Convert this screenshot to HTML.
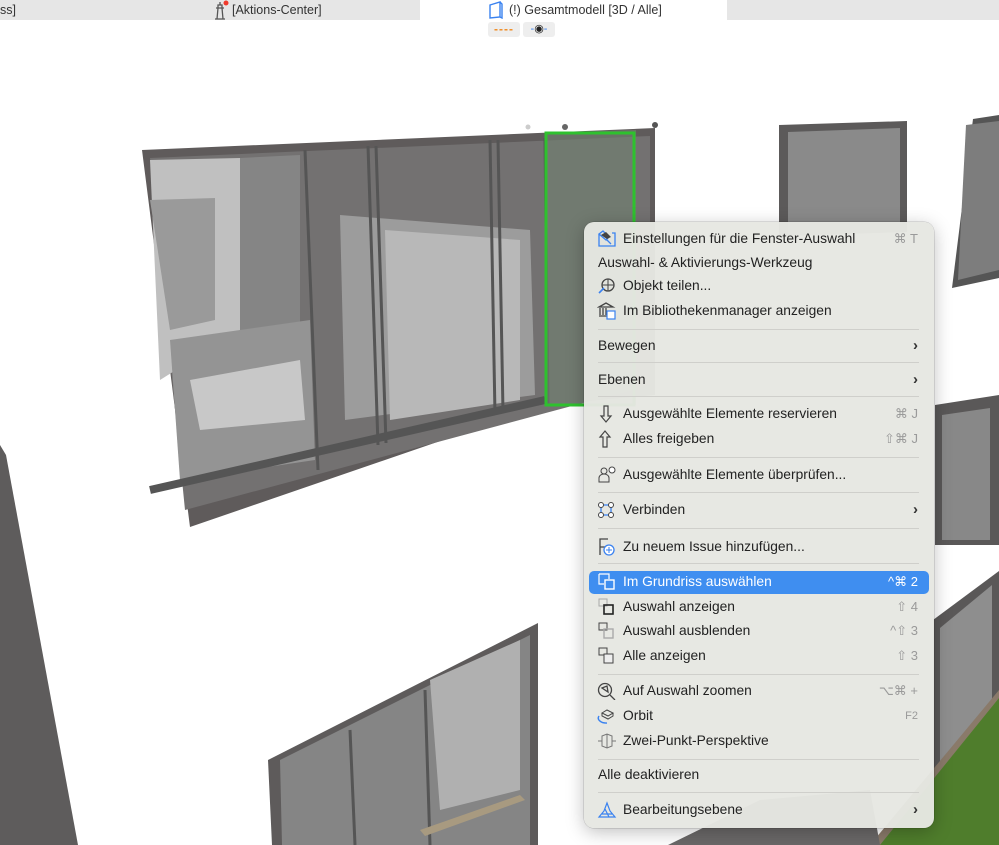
<!DOCTYPE html>
<html><head><meta charset="utf-8"><style>
*{margin:0;padding:0;box-sizing:border-box}
body{width:999px;height:845px;overflow:hidden;background:#fff;position:relative;font-family:"Liberation Sans",sans-serif}
.tab{position:absolute;top:0;height:20px;font-size:12.5px;color:#333;line-height:20px}
.menu{position:absolute;left:584px;top:222px;width:350px;height:606px;border-radius:10px;background:rgba(230,231,226,0.97);box-shadow:0 4px 18px rgba(0,0,0,0.25),0 0 0 0.5px rgba(0,0,0,0.2)}
.it{position:absolute;left:0;width:350px;height:22px;font-size:13.8px;color:#222;line-height:22px}
.it .t{position:absolute;left:39px}
.it .t0{position:absolute;left:14px}
.it .k{position:absolute;right:16px;color:#9a9a9a;font-size:13px}
.it .a{position:absolute;right:16px;color:#333;font-size:15px;font-weight:bold}
.it svg{position:absolute;left:13px;top:2px}
.sep{position:absolute;left:14px;width:321px;height:1px;background:#cfcfcb}
.hl{position:absolute;left:5px;top:349px;width:340px;height:23px;border-radius:5px;background:#3f8ef0}
</style></head><body>
<svg width="999" height="845" style="position:absolute;left:0;top:0">
<!-- left wall edge -->
<polygon points="0,445 6,455 78,845 0,845" fill="#5e5c5c"/>
<!-- big window -->
<polygon points="142,150 655,128 655,395 545,405 190,527" fill="#5f5b5b"/>
<polygon points="150,158 650,136 650,385 185,510" fill="#737171"/>
<polygon points="150,160 240,158 240,330 160,380" fill="#c0c0c0"/>
<polygon points="150,200 215,198 215,320 170,330" fill="#9a9a9a"/>
<polygon points="240,158 300,155 300,330 240,330" fill="#858585"/>
<polygon points="170,340 310,320 315,460 180,480" fill="#949494"/>
<polygon points="190,380 300,360 305,420 200,430" fill="#c8c8c8"/>
<polygon points="340,215 530,230 535,395 345,420" fill="#9c9c9c"/>
<polygon points="385,230 520,240 520,400 390,420" fill="#b8b8b8"/>
<g stroke="#555" stroke-width="3" fill="none">
<line x1="305" y1="150" x2="318" y2="470"/><line x1="368" y1="146" x2="378" y2="445"/>
<line x1="376" y1="146" x2="386" y2="443"/><line x1="490" y1="140" x2="495" y2="415"/>
<line x1="498" y1="140" x2="503" y2="412"/><line x1="545" y1="138" x2="548" y2="405"/>
<line x1="150" y1="490" x2="545" y2="400" stroke-width="8" stroke="#555"/>
</g>
<polygon points="545,133 636,130 636,405 545,405" fill="#6f806f" opacity="0.6"/>
<rect x="546" y="133" width="88" height="272" fill="none" stroke="#2ec12e" stroke-width="3"/>
<circle cx="528" cy="127" r="2.5" fill="#ccc"/><circle cx="565" cy="127" r="3" fill="#666"/><circle cx="655" cy="125" r="3" fill="#555"/>
<!-- right windows -->
<polygon points="779,125 907,121 907,232 779,236" fill="#5c5a5a"/>
<polygon points="788,132 900,128 900,232 788,236" fill="#8a8a8a"/>
<polygon points="973,119 999,115 999,278 952,288" fill="#555"/>
<polygon points="966,125 999,121 999,270 958,280" fill="#7d7d7d"/>
<polygon points="935,405 999,395 999,545 935,545" fill="#5a5858"/>
<polygon points="942,415 990,408 990,540 942,540" fill="#888"/>
<polygon points="933,620 999,571 999,845 933,845" fill="#5a5858"/>
<polygon points="940,628 992,585 992,760 940,775" fill="#8e8e8e"/>
<polygon points="999,690 999,845 870,845" fill="#8a7a6a"/>
<polygon points="999,698 999,845 880,845" fill="#4f7d2c"/>
<polygon points="668,845 760,800 870,790 880,845" fill="#6a6868"/>
<!-- lower window -->
<polygon points="268,760 538,623 538,845 272,845" fill="#5e5b5b"/>
<polygon points="280,760 530,635 530,845 282,845" fill="#858585"/>
<polygon points="430,680 520,640 520,790 440,810" fill="#b0b0b0"/>
<line x1="425" y1="690" x2="430" y2="845" stroke="#555" stroke-width="3"/>
<line x1="350" y1="730" x2="355" y2="845" stroke="#555" stroke-width="3"/>
<polygon points="420,830 520,795 525,800 425,836" fill="#a89a80"/>
</svg>
<div style="position:absolute;left:0;top:0;width:420px;height:20px;background:#e6e6e6"></div>
<div style="position:absolute;left:727px;top:0;width:272px;height:20px;background:#e6e6e6"></div>
<div class="tab" style="left:0">ss]</div>
<svg style="position:absolute;left:210px;top:0" width="20" height="20"><path d="M5 19h10M7 19l1-11h4l1 11M6 8h8M8 8V5h4v3M10 5V2" stroke="#555" fill="none" stroke-width="1.3"/><circle cx="16" cy="3" r="2.5" fill="#f03a2c"/></svg>
<div class="tab" style="left:232px">[Aktions-Center]</div>
<svg style="position:absolute;left:487px;top:1px" width="18" height="18"><path d="M3 4l10-3v15l-10 1z M13 1l2 2v14l-2-1" stroke="#3a82f0" fill="none" stroke-width="1.4"/></svg>
<div class="tab" style="left:509px">(!) Gesamtmodell [3D / Alle]</div>
<div style="position:absolute;left:488px;top:22px;width:32px;height:15px;background:#eee;border-radius:3px;color:#f08a20;font-size:12px;font-weight:bold;text-align:center;line-height:14px;letter-spacing:1px">----</div>
<div style="position:absolute;left:523px;top:22px;width:32px;height:15px;background:#eee;border-radius:3px;color:#3a82f0;font-size:11px;text-align:center;line-height:14px">-<span style="color:#222">◉</span>-</div>

<div class="menu">
<div class="it" style="top:6px"><svg width="20" height="18"><path d="M2 4v12h16V3h-3M2 4l4-3 6 6-3 3z M9 9l5 5" stroke="#3a82f0" fill="none" stroke-width="1.3"/><path d="M4 5l5-3 5 5-4 2z" fill="#444"/></svg><span class="t">Einstellungen für die Fenster-Auswahl</span><span class="k">⌘ T</span></div>
<div class="it" style="top:30px"><span class="t0">Auswahl- &amp; Aktivierungs-Werkzeug</span></div>
<div class="it" style="top:53px"><svg width="20" height="18"><circle cx="11" cy="8" r="6" stroke="#444" fill="none" stroke-width="1.3"/><path d="M5 8h12M11 2v12" stroke="#444" stroke-width="1"/><path d="M2 16l5-5" stroke="#3a82f0" stroke-width="1.6"/></svg><span class="t">Objekt teilen...</span></div>
<div class="it" style="top:78px"><svg width="20" height="18"><path d="M2 5l7-4 7 4z M3 6v7M6 6v7M9 6v7M2 14h12" stroke="#444" fill="none" stroke-width="1.3"/><rect x="10" y="9" width="8" height="8" stroke="#3a82f0" fill="#fff" stroke-width="1.2"/></svg><span class="t">Im Bibliothekenmanager anzeigen</span></div>
<div class="sep" style="top:107px"></div>
<div class="it" style="top:113px"><span class="t0">Bewegen</span><span class="a">›</span></div>
<div class="sep" style="top:140px"></div>
<div class="it" style="top:147px"><span class="t0">Ebenen</span><span class="a">›</span></div>
<div class="sep" style="top:174px"></div>
<div class="it" style="top:181px"><svg width="20" height="18"><path d="M7 1v10H4l5 6 5-6h-3V1z" stroke="#444" fill="none" stroke-width="1.2"/></svg><span class="t">Ausgewählte Elemente reservieren</span><span class="k">⌘ J</span></div>
<div class="it" style="top:206px"><svg width="20" height="18"><path d="M6 17V7H3l5-6 5 6h-3v10z" stroke="#444" fill="none" stroke-width="1.2"/></svg><span class="t">Alles freigeben</span><span class="k">⇧⌘ J</span></div>
<div class="sep" style="top:235px"></div>
<div class="it" style="top:242px"><svg width="20" height="18"><circle cx="7" cy="5" r="3" stroke="#444" fill="none"/><path d="M2 16v-4a5 4 0 0 1 10 0v4z" stroke="#444" fill="none"/><circle cx="15" cy="4" r="3" stroke="#444" fill="#fff"/></svg><span class="t">Ausgewählte Elemente überprüfen...</span></div>
<div class="sep" style="top:270px"></div>
<div class="it" style="top:277px"><svg width="20" height="18"><path d="M4 4h10M4 14h10M4 4v10M14 4v10" stroke="#3a82f0" stroke-width="1.3"/><circle cx="4" cy="4" r="2.5" fill="#fff" stroke="#444"/><circle cx="14" cy="4" r="2.5" fill="#fff" stroke="#444"/><circle cx="4" cy="14" r="2.5" fill="#fff" stroke="#444"/><circle cx="14" cy="14" r="2.5" fill="#fff" stroke="#444"/></svg><span class="t">Verbinden</span><span class="a">›</span></div>
<div class="sep" style="top:306px"></div>
<div class="it" style="top:314px"><svg width="20" height="18"><path d="M3 17V1h8M3 9h5" stroke="#444" fill="none" stroke-width="1.3"/><circle cx="12" cy="12" r="5" stroke="#3a82f0" fill="#fff" stroke-width="1.3"/><path d="M12 9v6M9 12h6" stroke="#3a82f0"/></svg><span class="t">Zu neuem Issue hinzufügen...</span></div>
<div class="sep" style="top:341px"></div>
<div class="hl"></div>
<div class="it" style="top:349px;color:#fff"><svg width="20" height="18"><path d="M2 1h10v5M2 1v10h5" stroke="#fff" fill="none" stroke-width="1.2"/><rect x="8" y="7" width="9" height="9" stroke="#fff" fill="none" stroke-width="1.4"/></svg><span class="t">Im Grundriss auswählen</span><span class="k" style="color:#fff">^⌘ 2</span></div>
<div class="it" style="top:374px"><svg width="20" height="18"><rect x="2" y="1" width="8" height="7" stroke="#aaa" fill="none"/><rect x="7" y="7" width="9" height="9" stroke="#222" fill="none" stroke-width="1.6"/></svg><span class="t">Auswahl anzeigen</span><span class="k">⇧ 4</span></div>
<div class="it" style="top:398px"><svg width="20" height="18"><rect x="2" y="1" width="8" height="7" stroke="#444" fill="none"/><rect x="7" y="7" width="9" height="9" stroke="#aaa" fill="none" stroke-width="1.4"/></svg><span class="t">Auswahl ausblenden</span><span class="k">^⇧ 3</span></div>
<div class="it" style="top:423px"><svg width="20" height="18"><rect x="2" y="1" width="8" height="7" stroke="#444" fill="none"/><rect x="7" y="7" width="9" height="9" stroke="#444" fill="#eee"/></svg><span class="t">Alle anzeigen</span><span class="k">⇧ 3</span></div>
<div class="sep" style="top:452px"></div>
<div class="it" style="top:458px"><svg width="20" height="18"><circle cx="8" cy="8" r="6.5" stroke="#444" fill="none" stroke-width="1.3"/><path d="M13 13l5 5M5 6l5-2 1 6z" stroke="#444" fill="none" stroke-width="1.3"/></svg><span class="t">Auf Auswahl zoomen</span><span class="k">⌥⌘ +</span></div>
<div class="it" style="top:483px"><svg width="20" height="18"><path d="M5 6l5-3 6 3-5 3z M5 6v3l6 3 5-3V6" stroke="#444" fill="none"/><path d="M2 9a8 5 0 0 0 8 7" stroke="#3a82f0" fill="none" stroke-width="1.4"/></svg><span class="t">Orbit</span><span class="k" style="font-size:11px">F2</span></div>
<div class="it" style="top:508px"><svg width="20" height="18"><path d="M1 9h4M15 9h4M5 4l5-2 5 2v10l-5 2-5-2z M10 2v14" stroke="#777" fill="none"/></svg><span class="t">Zwei-Punkt-Perspektive</span></div>
<div class="sep" style="top:537px"></div>
<div class="it" style="top:542px"><span class="t0">Alle deaktivieren</span></div>
<div class="sep" style="top:570px"></div>
<div class="it" style="top:577px"><svg width="20" height="18"><path d="M2 16l5-6 3-8 3 8 5 6z M5 13h10M8 8l4 8" stroke="#3a82f0" fill="none" stroke-width="1.2"/></svg><span class="t">Bearbeitungsebene</span><span class="a">›</span></div>
</div>
</body></html>
